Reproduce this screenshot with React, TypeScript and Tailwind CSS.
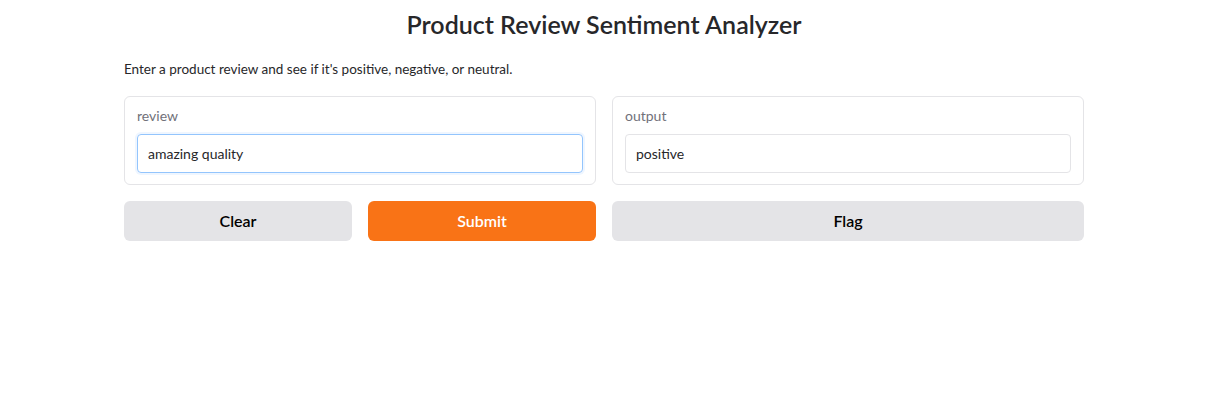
export default function App() {
  return (
    <div className="min-h-screen bg-white text-[#27272a]" style={{ fontFamily: "Lato, 'Noto Sans', sans-serif" }}>
      <div className="w-[960px] ml-[124px] pt-[8px]">
        <h1 className="text-center text-[25px] font-semibold leading-[32px]">Product Review Sentiment Analyzer</h1>
        <p className="mt-[17px] text-[13.5px] leading-[24px] text-[#27272a]">
          Enter a product review and see if it's positive, negative, or neutral.
        </p>
        <div className="mt-[15px] grid grid-cols-2 gap-4">
          <div className="border border-[#e4e4e7] rounded-[6px] px-[12px] pt-[9px] pb-[11px]">
            <label className="block text-[14px] leading-[20px] text-[#71717a] mb-[8px]">review</label>
            <div className="h-[39px] rounded-[4px] border border-[#93c5fd] shadow-[0_0_0_2px_#eff6ff] flex items-center px-[10px] text-[14px]">
              amazing quality
            </div>
          </div>
          <div className="border border-[#e4e4e7] rounded-[6px] px-[12px] pt-[9px] pb-[11px]">
            <label className="block text-[14px] leading-[20px] text-[#71717a] mb-[8px]">output</label>
            <div className="h-[39px] rounded-[4px] border border-[#e4e4e7] flex items-center px-[10px] text-[14px]">
              positive
            </div>
          </div>
        </div>
        <div className="mt-[16px] grid grid-cols-2 gap-4">
          <div className="grid grid-cols-2 gap-4">
            <button className="h-[40px] rounded-[6px] bg-[#e4e4e7] text-[16px] font-semibold text-black">Clear</button>
            <button className="h-[40px] rounded-[6px] bg-[#f97316] text-[16px] font-semibold text-white">Submit</button>
          </div>
          <button className="h-[40px] rounded-[6px] bg-[#e4e4e7] text-[16px] font-semibold text-black">Flag</button>
        </div>
      </div>
    </div>
  );
}
